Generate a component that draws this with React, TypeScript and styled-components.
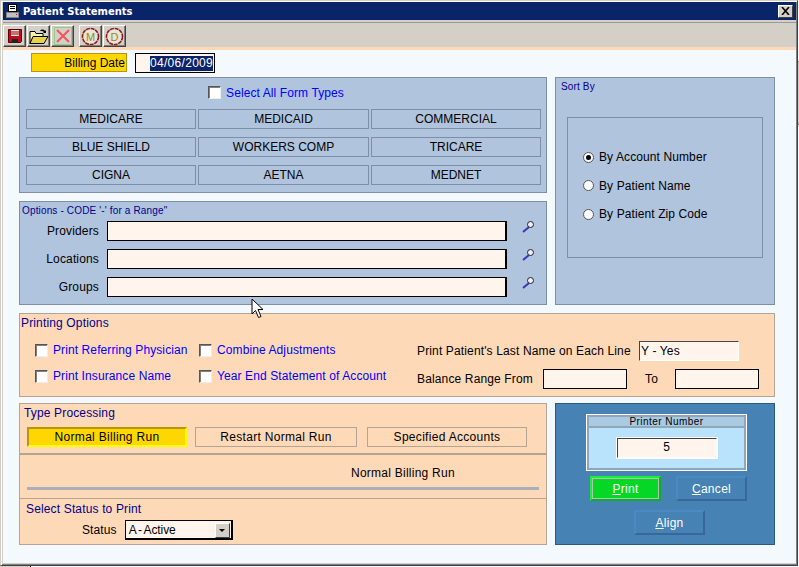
import React from 'react';
import styled, { createGlobalStyle } from 'styled-components';

const GlobalStyle = createGlobalStyle`
  html, body { margin: 0; padding: 0; background: #f4f9fd; }
  body { font-family: "Liberation Sans", Arial, sans-serif; font-size: 12px; color: #000; }
  * { box-sizing: border-box; }
`;

const Desktop = styled.div`
  position: relative;
  width: 799px;
  height: 567px;
  overflow: hidden;
  background: #f4f9fd;
`;

const Window = styled.div`
  width: 798px;
  height: 566px;
  background: #d4d0c8;
  border-top: 1px solid #d4d0c8;
  border-left: 1px solid #d4d0c8;
  border-right: 1px solid #404040;
  border-bottom: 1px solid #404040;
  box-shadow: inset 1px 1px 0 #fff, inset -1px -1px 0 #808080;
  padding: 1px 1px 2px 2px;
  display: flex;
  flex-direction: column;
`;

const TitleBar = styled.div`
  height: 18px;
  flex: none;
  background: #0a246a;
  display: flex;
  align-items: center;
  padding: 0 3px 0 3px;
  gap: 3px;
`;

const TitleText = styled.span`
  flex: 1;
  color: #fff;
  font: bold 10px "DejaVu Sans", Verdana, sans-serif;
`;

const CloseButton = styled.div`
  width: 15px;
  height: 13px;
  background: #d4d0c8;
  border: 1px solid;
  border-color: #fff #404040 #404040 #fff;
  display: flex;
  align-items: center;
  justify-content: center;
`;

const ToolBar = styled.div`
  height: 25px;
  flex: none;
  margin-top: 2px;
  border-top: 1px solid #9a9a96;
  background: #d4d0c8;
  display: flex;
  align-items: flex-end;
  gap: 1px;
`;

const ToolButton = styled.div<{ $gap?: boolean }>`
  width: 23px;
  height: 22px;
  margin-left: ${({ $gap }) => ($gap ? '4px' : '0')};
  background: #d4d0c8;
  border: 1px solid;
  border-color: #fff #404040 #404040 #fff;
  box-shadow: inset -1px -1px 0 #808080;
  display: flex;
  align-items: center;
  justify-content: center;
`;

const Content = styled.div`
  flex: 1;
  background: #f4f9fd;
  border-top: 3px solid #fed9b8;
  padding: 3px 20px 0 16px;
`;

const BillingRow = styled.div`
  display: flex;
  align-items: flex-start;
  gap: 8px;
  margin-left: 12px;
  height: 24px;
`;

const BillingLabel = styled.div`
  width: 96px;
  height: 19px;
  background: #ffd700;
  border: 1px solid #b8960c;
  display: flex;
  align-items: center;
  justify-content: flex-end;
  font-size: 12px;
  padding-right: 1px;
`;

const DateBox = styled.div`
  width: 80px;
  height: 20px;
  background: #fff5ec;
  border: 1px solid #000;
  display: flex;
  align-items: center;
  justify-content: flex-end;
  padding-right: 1px;
`;

const Selected = styled.span`
  background: #0a246a;
  color: #fff;
  width: 63px;
  height: 15px;
  line-height: 15px;
  text-align: right;
  letter-spacing: 0.3px;
`;

const Grid = styled.div`
  display: grid;
  grid-template-columns: 528px 220px;
  column-gap: 8px;
`;

const Panel = styled.section<{ $tone?: 'blue' | 'peach' | 'steel' }>`
  border: 1px solid ${({ $tone }) =>
    $tone === 'steel' ? '#2d5a80' : $tone === 'peach' ? '#b5a494' : '#7d8ea6'};
  background: ${({ $tone }) =>
    $tone === 'steel' ? '#4682b4' : $tone === 'peach' ? '#fed9b8' : '#b0c4de'};
`;

const FormTypes = styled(Panel)`
  height: 116px;
  padding: 0 5px 0 6px;
`;

const SelectAll = styled.div`
  height: 31px;
  padding: 0 15px 2px 0;
  display: flex;
  align-items: center;
  justify-content: center;
  gap: 5px;
`;

const BlueLabel = styled.span`
  color: #0000ff;
  font-size: 12px;
  letter-spacing: 0.1px;
  white-space: nowrap;
`;

const FormGrid = styled.div`
  display: grid;
  grid-template-columns: 170px 171px 170px;
  grid-auto-rows: 20px;
  column-gap: 2px;
  row-gap: 8px;
`;

const FormButton = styled.div`
  border: 1px solid #7d8ea6;
  display: flex;
  align-items: center;
  justify-content: center;
  font-size: 12px;
`;

const SortPanel = styled(Panel)`
  grid-row: span 2;
  height: 228px;
  padding: 3px 11px 0;
`;

const Legend = styled.div`
  color: #00008b;
  font-size: 10px;
  letter-spacing: 0.15px;
  line-height: 12px;
  margin-left: -6px;
`;

const SortBox = styled.div`
  margin-top: 24px;
  height: 141px;
  border: 1px solid #7d8ea6;
  padding: 32px 0 0 15px;
  display: flex;
  flex-direction: column;
  gap: 14px;
`;

const RadioRow = styled.div`
  display: flex;
  align-items: center;
  gap: 5px;
  height: 14.5px;
  letter-spacing: 0.1px;
`;

const Radio = styled.span<{ $on?: boolean }>`
  width: 11px;
  height: 11px;
  border-radius: 50%;
  background: #fff;
  border: 1px solid #555;
  display: flex;
  align-items: center;
  justify-content: center;
  &::after {
    content: '';
    width: 5px;
    height: 5px;
    border-radius: 50%;
    background: ${({ $on }) => ($on ? '#000' : 'transparent')};
  }
`;

const OptionsPanel = styled(Panel)`
  height: 104px;
  margin-top: 8px;
  padding: 3px 0 0 1px;
`;

const OptionsLegend = styled(Legend)`
  margin-left: 1px;
  height: 16px;
`;

const OptionRow = styled.div`
  display: flex;
  align-items: center;
  height: 20px;
  margin-bottom: 8px;
`;

const OptionLabel = styled.span`
  width: 78px;
  text-align: right;
  letter-spacing: 0.15px;
`;

const LongField = styled.input`
  width: 400px;
  height: 20px;
  margin: 0 15px 0 8px;
  background: #fff5ec;
  border: 1px solid #000;
  border-width: 1px 2px 1px 1px;
  padding: 0;
`;

const Lens = styled.svg`
  flex: none;
  align-self: flex-start;
`;

const PrintPanel = styled(Panel)`
  grid-column: span 2;
  height: 84px;
  margin-top: 8px;
  padding: 2px 15px 0 1px;
`;

const SectionTitle = styled.div`
  color: #00008b;
  font-size: 12px;
  letter-spacing: 0.15px;
  line-height: 15px;
`;

const PrintBody = styled.div`
  display: flex;
  margin: 12px 0 0 14px;
`;

const CheckColumn = styled.div<{ $width: number }>`
  width: ${({ $width }) => $width}px;
  display: flex;
  flex-direction: column;
  gap: 12px;
`;

const CheckRow = styled.div`
  height: 14px;
  display: flex;
  align-items: center;
  gap: 5px;
`;

const Check = styled.span`
  flex: none;
  width: 13px;
  height: 13px;
  background: #fff;
  border: 1px solid;
  border-color: #555 #eee #eee #555;
  box-shadow: inset 1px 1px 0 #808080;
`;

const RangeColumn = styled.div`
  display: flex;
  flex-direction: column;
  gap: 8px;
  margin-top: -2px;
`;

const RangeRow = styled.div`
  display: flex;
  align-items: center;
  height: 20px;
  letter-spacing: 0.14px;
  white-space: nowrap;
`;

const RangeLabel = styled.span<{ $width: number }>`
  width: ${({ $width }) => $width}px;
  flex: none;
`;

const SmallField = styled.div<{ $width: number; $left?: number }>`
  width: ${({ $width }) => $width}px;
  height: 20px;
  margin-left: ${({ $left }) => $left ?? 0}px;
  background: #fff5ec;
  border: 1px solid #000;
  border-color: #444 #fff #fff #444;
  padding: 2px 1px;
  line-height: 15px;
`;

const BottomField = styled(SmallField)`
  border-color: #000;
`;

const ToLabel = styled.span`
  margin-left: 18px;
`;

const TypePanel = styled(Panel)`
  height: 142px;
  margin-top: 6px;
  display: flex;
  flex-direction: column;
`;

const TypeTop = styled.div`
  height: 51px;
  padding: 2px 0 0 4px;
  border-bottom: 2px solid #b5a494;
  flex: none;
`;

const TypeButtons = styled.div`
  display: flex;
  gap: 8px;
  margin: 6px 0 0 3px;
`;

const TypeButton = styled.div<{ $width: number; $active?: boolean; $left?: number }>`
  width: ${({ $width }) => $width}px;
  height: 20px;
  margin-left: ${({ $left }) => $left ?? 0}px;
  display: flex;
  align-items: center;
  justify-content: center;
  letter-spacing: 0.3px;
  background: ${({ $active }) => ($active ? '#ffd700' : 'transparent')};
  border: ${({ $active }) => ($active ? '2px' : '1px')} solid;
  border-color: ${({ $active }) =>
    $active ? '#b8960c #ffff00 #ffff00 #b8960c' : '#b5a494'};
`;

const TypeMiddle = styled.div`
  height: 44px;
  flex: none;
  padding: 0 7px 0 7px;
  border-bottom: 1px solid #b5a494;
`;

const RunLabel = styled.div`
  height: 32px;
  padding: 11px 0 0 324px;
  letter-spacing: 0.25px;
  line-height: 15px;
`;

const RunBar = styled.div`
  height: 3px;
  background: #a9aeb9;
`;

const StatusPart = styled.div`
  padding: 3px 0 0 6px;
`;

const StatusRow = styled.div`
  display: flex;
  align-items: center;
  gap: 8px;
  margin: 3px 0 0 56px;
  letter-spacing: 0.1px;
`;

const StatusSelect = styled.div`
  width: 108px;
  height: 20px;
  background: #fff5ec;
  border: 1px solid #000;
  border-width: 1px 2px 2px 1px;
  display: flex;
  align-items: center;
  justify-content: space-between;
  padding: 1px 1px 0 3px;
  letter-spacing: -0.1px;
  word-spacing: -1px;
`;

const SelectArrow = styled.span`
  width: 15px;
  height: 15px;
  background: #d4d0c8;
  border: 1px solid;
  border-color: #fff #404040 #404040 #fff;
  display: flex;
  align-items: center;
  justify-content: center;
  &::after {
    content: '';
    border: 3px solid transparent;
    border-top: 3px solid #000;
    border-bottom: 0;
  }
`;

const PrinterPanel = styled(Panel)`
  height: 142px;
  margin-top: 6px;
  padding: 10px 0 0 30px;
`;

const PrinterBox = styled.div`
  width: 161px;
  height: 57px;
  background: #b9e3fc;
  border: 3px solid #8fa7b8;
  outline: 1px solid #fff;
  outline-offset: -1px;
  display: flex;
  flex-direction: column;
  align-items: center;
`;

const PrinterHead = styled.div`
  width: 100%;
  height: 11px;
  flex: none;
  background: #a9cae0;
  border-bottom: 2px solid #8fa7b8;
  font-size: 10px;
  line-height: 9px;
  letter-spacing: 0.45px;
  text-align: center;
`;

const PrinterInput = styled.div`
  width: 100px;
  height: 20px;
  margin-top: 10px;
  background: #fff5ec;
  border: 1px solid;
  border-color: #444 #fff #fff #444;
  outline: 1px solid #fff;
  text-align: center;
  line-height: 17px;
`;

const ActionRow = styled.div`
  display: flex;
  gap: 15px;
  margin: 5px 0 0 4px;
`;

const ActionButton = styled.div<{ $primary?: boolean }>`
  width: 71px;
  height: 25px;
  color: #fff;
  letter-spacing: 0.3px;
  display: flex;
  align-items: center;
  justify-content: center;
  background: ${({ $primary }) => ($primary ? '#06d726' : '#4682b4')};
  border: 2px solid;
  border-color: ${({ $primary }) =>
    $primary ? '#18f038 #0ab02a #0ab02a #18f038' : '#4a8ac4 #38689a #38689a #4a8ac4'};
  outline: ${({ $primary }) => ($primary ? '1px solid #b0c4b0' : 'none')};
  outline-offset: -3px;
`;

const AlignRow = styled.div`
  margin-top: 9px;
  margin-left: 48px;
`;

const Pointer = styled.svg`
  position: absolute;
  left: 251px;
  top: 298px;
`;

const Edge = styled.div`
  position: absolute;
  right: 0;
  top: 61px;
  width: 1px;
  height: 64px;
  background: #d4d0c8;
  border-top: 1px solid #777;
  border-bottom: 1px solid #777;
`;

const BottomEdge = styled.div`
  position: absolute;
  left: 0;
  bottom: 0;
  width: 31px;
  height: 1px;
  background: #d4d0c8;
  border-right: 1px solid #000;
`;

const PrinterGlyph = () => (
  <svg width="14" height="14" viewBox="0 0 14 14">
    <rect x="2.5" y="0.5" width="8" height="7" fill="#fff" stroke="#000" />
    <path d="M4 2.5h5M4 4.5h5" stroke="#000" />
    <rect x="0.5" y="8.5" width="12" height="5" fill="#c0c0c0" stroke="#808080" />
    <rect x="10" y="10" width="1" height="1" fill="#c00" />
  </svg>
);

const SaveIcon = () => (
  <svg width="14" height="14" viewBox="0 0 14 14">
    <path d="M0.5 0.5h13v12l-1 1h-12z" fill="#b80d1c" stroke="#5a0008" />
    <rect x="3" y="1" width="8" height="6" fill="#f6dede" />
    <path d="M3 3h8M3 5h8" stroke="#900" />
    <rect x="4" y="10" width="6" height="4" fill="#222" />
  </svg>
);

const OpenIcon = () => (
  <svg width="20" height="16" viewBox="0 0 20 16">
    <path d="M11 3c1-2 4-2 5 0l1-1v3h-3l1-1c-1-1-2-1-3-1" fill="#000" />
    <path d="M1 3.5h5l1 2h7v3H5l-4 7z" fill="#fbf3b0" stroke="#000" />
    <path d="M1 15.5l3-7h15l-4 7z" fill="#e8d24a" stroke="#000" />
  </svg>
);

const DeleteIcon = () => (
  <svg width="18" height="18" viewBox="0 0 18 18">
    <rect x="0.5" y="0.5" width="17" height="17" fill="#d4d0c8" stroke="#8fd080" />
    <path d="M3 3l12 12M15 3L3 15" stroke="#f2545c" strokeWidth="2" />
  </svg>
);

const LetterIcon = ({ letter }: { letter: string }) => (
  <svg width="19" height="19" viewBox="0 0 19 19">
    <circle cx="9.5" cy="9.5" r="8" fill="#e8e4dc" stroke="#8b1a1a" strokeWidth="1.6" strokeDasharray="4 0.7" />
    <text
      x="9.5"
      y="13.5"
      textAnchor="middle"
      fontSize="11"
      fontFamily="Liberation Sans, sans-serif"
      fill="#8f8f10"
    >
      {letter}
    </text>
  </svg>
);

const Magnifier = () => (
  <Lens width="13" height="12" viewBox="0 0 13 12">
    <path d="M1 11l6-5" stroke="#3a35b8" strokeWidth="2" />
    <circle cx="8.5" cy="3.5" r="3" fill="#eef" stroke="#222" />
  </Lens>
);

const formTypes = [
  'MEDICARE',
  'MEDICAID',
  'COMMERCIAL',
  'BLUE SHIELD',
  'WORKERS COMP',
  'TRICARE',
  'CIGNA',
  'AETNA',
  'MEDNET',
];

export default function App() {
  return (
    <Desktop>
      <GlobalStyle />
      <Window>
        <TitleBar>
          <PrinterGlyph />
          <TitleText>Patient Statements</TitleText>
          <CloseButton>
            <svg width="9" height="8" viewBox="0 0 9 8">
              <path d="M1 0l7 8M8 0L1 8" stroke="#000" strokeWidth="1.6" />
            </svg>
          </CloseButton>
        </TitleBar>
        <ToolBar>
          <ToolButton><SaveIcon /></ToolButton>
          <ToolButton><OpenIcon /></ToolButton>
          <ToolButton><DeleteIcon /></ToolButton>
          <ToolButton $gap><LetterIcon letter="M" /></ToolButton>
          <ToolButton><LetterIcon letter="D" /></ToolButton>
        </ToolBar>
        <Content>
          <BillingRow>
            <BillingLabel>Billing Date</BillingLabel>
            <DateBox><Selected>04/06/2009</Selected></DateBox>
          </BillingRow>
          <Grid>
            <FormTypes>
              <SelectAll>
                <Check />
                <BlueLabel>Select All Form Types</BlueLabel>
              </SelectAll>
              <FormGrid>
                {formTypes.map((t) => (
                  <FormButton key={t}>{t}</FormButton>
                ))}
              </FormGrid>
            </FormTypes>
            <SortPanel>
              <Legend>Sort By</Legend>
              <SortBox>
                <RadioRow><Radio $on />By Account Number</RadioRow>
                <RadioRow><Radio />By Patient Name</RadioRow>
                <RadioRow><Radio />By Patient Zip Code</RadioRow>
              </SortBox>
            </SortPanel>
            <OptionsPanel>
              <OptionsLegend>Options - CODE '-' for a Range"</OptionsLegend>
              {['Providers', 'Locations', 'Groups'].map((l) => (
                <OptionRow key={l}>
                  <OptionLabel>{l}</OptionLabel>
                  <LongField readOnly />
                  <Magnifier />
                </OptionRow>
              ))}
            </OptionsPanel>
            <PrintPanel $tone="peach">
              <SectionTitle>Printing Options</SectionTitle>
              <PrintBody>
                <CheckColumn $width={164}>
                  <CheckRow><Check /><BlueLabel>Print Referring Physician</BlueLabel></CheckRow>
                  <CheckRow><Check /><BlueLabel>Print Insurance Name</BlueLabel></CheckRow>
                </CheckColumn>
                <CheckColumn $width={218}>
                  <CheckRow><Check /><BlueLabel>Combine Adjustments</BlueLabel></CheckRow>
                  <CheckRow><Check /><BlueLabel>Year End Statement of Account</BlueLabel></CheckRow>
                </CheckColumn>
                <RangeColumn>
                  <RangeRow>
                    <RangeLabel $width={222}>Print Patient's Last Name on Each Line</RangeLabel>
                    <SmallField $width={100}>Y - Yes</SmallField>
                  </RangeRow>
                  <RangeRow>
                    <RangeLabel $width={126}>Balance Range From</RangeLabel>
                    <BottomField $width={84} />
                    <ToLabel>To</ToLabel>
                    <BottomField $width={84} $left={17} />
                  </RangeRow>
                </RangeColumn>
              </PrintBody>
            </PrintPanel>
            <TypePanel $tone="peach">
              <TypeTop>
                <SectionTitle>Type Processing</SectionTitle>
                <TypeButtons>
                  <TypeButton $width={160} $active>Normal Billing Run</TypeButton>
                  <TypeButton $width={162}>Restart Normal Run</TypeButton>
                  <TypeButton $width={160} $left={2}>Specified Accounts</TypeButton>
                </TypeButtons>
              </TypeTop>
              <TypeMiddle>
                <RunLabel>Normal Billing Run</RunLabel>
                <RunBar />
              </TypeMiddle>
              <StatusPart>
                <SectionTitle>Select Status to Print</SectionTitle>
                <StatusRow>
                  Status
                  <StatusSelect>A - Active<SelectArrow /></StatusSelect>
                </StatusRow>
              </StatusPart>
            </TypePanel>
            <PrinterPanel $tone="steel">
              <PrinterBox>
                <PrinterHead>Printer Number</PrinterHead>
                <PrinterInput>5</PrinterInput>
              </PrinterBox>
              <ActionRow>
                <ActionButton $primary><span><u>P</u>rint</span></ActionButton>
                <ActionButton><span><u>C</u>ancel</span></ActionButton>
              </ActionRow>
              <AlignRow>
                <ActionButton><span><u>A</u>lign</span></ActionButton>
              </AlignRow>
            </PrinterPanel>
          </Grid>
        </Content>
      </Window>
      <Edge />
      <BottomEdge />
      <Pointer width="13" height="21" viewBox="0 0 13 21">
        <path d="M1 1v15l3.5-3.5 3 7 2.5-1-3-7h5z" fill="#fff" stroke="#000" />
      </Pointer>
    </Desktop>
  );
}
